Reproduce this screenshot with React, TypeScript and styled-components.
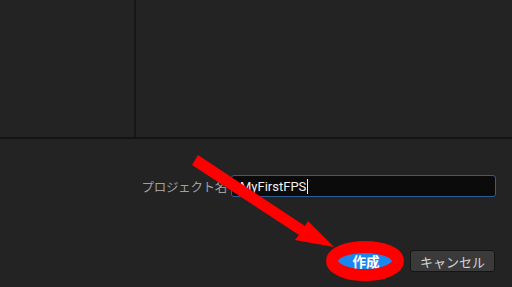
import styled, { createGlobalStyle } from "styled-components";

const GlobalStyle = createGlobalStyle`
  html, body {
    margin: 0;
    padding: 0;
    background: #232323;
  }
`;

const Page = styled.div`
  position: relative;
  width: 512px;
  height: 287px;
  overflow: hidden;
  background: #232323;
  font-family: "Noto Sans CJK JP", Roboto, sans-serif;
`;

const TopPanels = styled.div`
  display: flex;
  height: 137px;
  border-bottom: 2px solid #141414;
`;

const SidePanel = styled.div`
  width: 134px;
  border-right: 2px solid #171717;
`;

const MainPanel = styled.div`
  flex: 1;
`;

const Form = styled.div`
  display: flex;
  flex-direction: column;
  padding: 36px 16px 0 0;
`;

const FieldRow = styled.div`
  display: flex;
  justify-content: flex-end;
  align-items: center;
  gap: 4px;
`;

const Label = styled.span`
  font-size: 12.5px;
  color: #a0a0a0;
  letter-spacing: -0.3px;
`;

const TextBox = styled.div`
  box-sizing: border-box;
  width: 265px;
  height: 22px;
  display: flex;
  align-items: center;
  padding-left: 8px;
  background: #0b0b0b;
  border: 1px solid #2e5d95;
  border-radius: 3px;
  font-family: Roboto, sans-serif;
  font-size: 13px;
  color: #f0f0f0;
`;

const Caret = styled.span`
  display: inline-block;
  width: 1px;
  height: 15px;
  margin-left: 1px;
  background: #f4f4f4;
`;

const ButtonRow = styled.div`
  display: flex;
  justify-content: flex-end;
  gap: 14px;
  margin-top: 53px;
  padding-right: 1px;
`;

const Button = styled.button<{ $primary?: boolean }>`
  box-sizing: border-box;
  height: 22px;
  width: ${(p) => (p.$primary ? "60px" : "85px")};
  padding: 0;
  border: 1px solid ${(p) => (p.$primary ? "#0f5fb8" : "#151515")};
  border-radius: 3px;
  background: ${(p) => (p.$primary ? "#1a86f0" : "#3a3a3a")};
  color: ${(p) => (p.$primary ? "#ffffff" : "#d4d4d4")};
  font-family: "Noto Sans CJK JP", sans-serif;
  font-size: ${(p) => (p.$primary ? "13.5px" : "13px")};
  font-weight: ${(p) => (p.$primary ? 700 : 400)};
`;

const Overlay = styled.svg`
  position: absolute;
  left: 0;
  top: 0;
  pointer-events: none;
`;

function App() {
  return (
    <Page>
      <GlobalStyle />
      <TopPanels>
        <SidePanel />
        <MainPanel />
      </TopPanels>
      <Form>
        <FieldRow>
          <Label>プロジェクト名</Label>
          <TextBox>
            MyFirstFPS
            <Caret />
          </TextBox>
        </FieldRow>
        <ButtonRow>
          <Button $primary>作成</Button>
          <Button>キャンセル</Button>
        </ButtonRow>
      </Form>
      <Overlay width="512" height="287" viewBox="0 0 512 287">
        <polygon
          points="198,155 305,226 308,221 334,247 295,240 299,235 192,165"
          fill="#ff0000"
        />
        <ellipse cx="365" cy="261" rx="33" ry="14" fill="none" stroke="#ff0000" strokeWidth="12" />
      </Overlay>
    </Page>
  );
}

export default App;
